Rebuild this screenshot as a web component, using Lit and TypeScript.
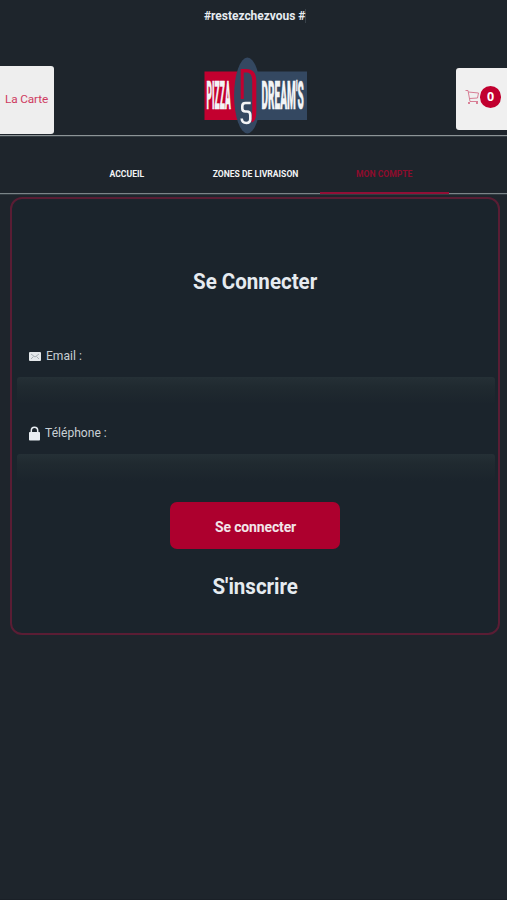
import { LitElement, html, css, svg } from "lit";
import { customElement } from "lit/decorators.js";

@customElement("pizza-logo")
class PizzaLogo extends LitElement {
  static styles = css`
    :host { display: block; width: 104px; height: 78px; }
    svg { display: block; }
    .word { font-family: "Roboto", sans-serif; font-weight: 900; font-size: 38px; fill: #f3f4f6; stroke: #f3f4f6; stroke-width: .5; }
  `;
  render() {
    return html`<svg width="104" height="78" viewBox="0 0 104 78">
      <rect x="0.5" y="14.500" width="40" height="48.500" fill="#c3002f" />
      <rect x="40" y="14.500" width="63" height="48.500" fill="#344861" />
      <ellipse cx="43.400" cy="38.500" rx="13.300" ry="38" fill="#344861" />
      <path d="M36.700 42V12H42C49 12 52.300 16 52.300 24V54C52.300 61 51 64.500 47.500 65.500V62C48.200 61 48.200 58 48.200 54V25C48.200 18 46.500 15.500 42 15.500H39.700V42Z" fill="#c3002f" />
      <path d="M46.700 46H41.500Q38.300 46 38.300 49V51.500Q38.300 54.500 41.500 54.500H43Q46.300 54.500 46.300 58V62Q46.300 66 42.300 66Q38 66 37.700 61.500" fill="none" stroke="#f3f4f6" stroke-width="2.6" />
      <text class="word" transform="translate(2.500 52.300) scale(.25 1)" textLength="97" lengthAdjust="spacingAndGlyphs">PIZZA</text>
      <text class="word" transform="translate(57.500 52.300) scale(.25 1)" textLength="169" lengthAdjust="spacingAndGlyphs">DREAM'S</text>
    </svg>`;
  }
}

const envelope = svg`<svg width="12" height="9" viewBox="0 0 12 9">
  <rect width="12" height="9" rx="1" fill="#e4e8eb" />
  <path d="M2 2L6 5L10 2M2 7L4.500 4.500M10 7L7.500 4.500" fill="none" stroke="#8d969c" stroke-width=".7" />
</svg>`;

const padlock = svg`<svg width="11" height="15" viewBox="0 0 11 15">
  <path d="M2.300 8V4.500C2.300 0 8.700 0 8.700 4.500V8" fill="none" stroke="#e8edf2" stroke-width="1.500" />
  <rect y="6" width="11" height="8.500" rx=".8" fill="#e8edf2" />
</svg>`;

const cart = svg`<svg width="15" height="16" viewBox="0 0 15 16">
  <path d="M.5 1.500H3L5 12.500H13M3.300 3L13.500 4L12.500 9L4.500 9.500" fill="none" stroke="#d4718a" stroke-width=".9" />
  <circle cx="4" cy="14" r=".9" fill="#cf4c6d" />
  <circle cx="12" cy="14" r=".9" fill="#cf4c6d" />
</svg>`;

@customElement("app-root")
class AppRoot extends LitElement {
  static styles = css`
    :host {
      display: flex; flex-direction: column; box-sizing: border-box;
      width: 100%; height: 900px; overflow: hidden;
      background: #1e252c; color: #e6ebf0;
      border-bottom: 1px solid #1a2027;
      font-family: "Roboto", sans-serif;
    }
    * { box-sizing: border-box; }
    .ticker {
      height: 57px; padding: 8px 0 0 204px;
      font-size: 12px; line-height: 16px; font-weight: 700; white-space: nowrap;
    }
    .ticker span { border-right: 1px solid #39424a; letter-spacing: -0.03px; }
    .header {
      height: 79px; display: grid; grid-template-columns: 204px 104px 1fr;
      border-bottom: 1px solid #8d9497; box-shadow: 0 1px #343d43;
    }
    .menu {
      width: 54px; height: 68px; margin-top: 9px; padding: 0 0 2px 5px;
      background: #eee; border-radius: 0 3px 3px 0;
      display: flex; align-items: center;
      color: #cf3c62; font-size: 11.800px; letter-spacing: -0.15px; white-space: nowrap;
    }
    .basket {
      justify-self: end; width: 51px; height: 62px; margin-top: 11px; padding: 0 0 5px 9px;
      background: #f0f0f0; border-radius: 3px 0 0 3px;
      display: flex; align-items: center;
    }
    .count {
      width: 21px; height: 22px; border-radius: 11px; background: #c1002f;
      color: #fff; font: 700 12.5px/21px "Open Sans", sans-serif; text-align: center;
    }
    .nav {
      height: 58px; padding-left: 62.5px; display: flex;
      border-bottom: 1px solid #7b8488; box-shadow: 0 1px #333c42;
    }
    .tab {
      width: 128.700px; height: 58px; padding-top: 33px; text-align: center;
      font-size: 8.600px; line-height: 10px; font-weight: 700; color: #f2f4f5;
    }
    .tab.active { color: #8e0c2d; border-bottom: 2px solid #920f36; }
    .card {
      width: 490px; height: 438px; margin: 3px 0 0 10px; padding: 67px 3px 0 4px;
      border: 2px solid #5a1d34; border-radius: 12px; background: #1b242c;
      display: flex; flex-direction: column; align-items: center;
    }
    .title {
      margin: 0; height: 30px; font-size: 22.200px; line-height: 30px; font-weight: 700;
      transform: scaleX(.925);
    }
    .field { width: 100%; height: 77px; }
    .field.first { margin-top: 43px; }
    .label {
      display: flex; align-items: center; height: 36px; padding: 0 0 2px 13px; gap: 5px;
      color: #c9d0d5; font-size: 12.100px; white-space: nowrap;
    }
    .input {
      height: 27px; margin: 2px 0 0 1px; border-radius: 3px;
      background: linear-gradient(#253036, #202a30 35%, #1b242c);
    }
    .submit {
      width: 170px; height: 47px; margin: 9px 1px 0 0; border: 0; border-radius: 7px;
      background: #ad002e; color: #f2e5e9; font: 700 14px "Roboto", sans-serif; letter-spacing: -.15px;
      padding: 2px 0 0 1px;
    }
    .register { margin-top: 22px; }
  `;
  render() {
    return html`
      <div class="ticker"><span>#restezchezvous #</span></div>
      <header class="header">
        <div class="menu">La Carte</div>
        <pizza-logo></pizza-logo>
        <div class="basket">${cart}<span class="count">0</span></div>
      </header>
      <nav class="nav">
        <div class="tab">ACCUEIL</div>
        <div class="tab">ZONES DE LIVRAISON</div>
        <div class="tab active">MON COMPTE</div>
      </nav>
      <main class="card">
        <h2 class="title">Se Connecter</h2>
        <div class="field first"><div class="label">${envelope}<span>Email :</span></div><div class="input"></div></div>
        <div class="field"><div class="label">${padlock}<span>Téléphone :</span></div><div class="input"></div></div>
        <button class="submit">Se connecter</button>
        <h2 class="title register">S'inscrire</h2>
      </main>
    `;
  }
}
